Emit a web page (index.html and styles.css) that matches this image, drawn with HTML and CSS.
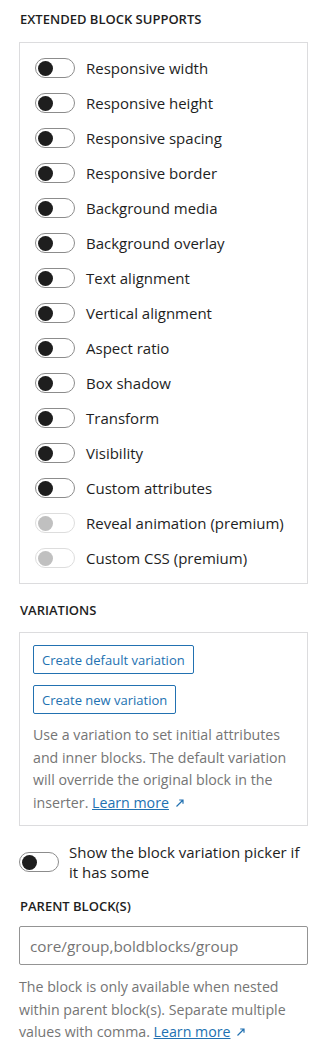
FILE: index.html
```html
<!DOCTYPE html>
<html lang="en">
<head>
<meta charset="utf-8">
<title>Block settings</title>
<link rel="stylesheet" href="styles.css">
</head>
<body>
<div class="panel">
  <h2 class="section-title">EXTENDED BLOCK SUPPORTS</h2>
  <div class="box toggle-list">
    <div class="toggle-row"><span class="toggle"><span class="thumb"></span></span><span class="label">Responsive width</span></div>
    <div class="toggle-row"><span class="toggle"><span class="thumb"></span></span><span class="label">Responsive height</span></div>
    <div class="toggle-row"><span class="toggle"><span class="thumb"></span></span><span class="label">Responsive spacing</span></div>
    <div class="toggle-row"><span class="toggle"><span class="thumb"></span></span><span class="label">Responsive border</span></div>
    <div class="toggle-row"><span class="toggle"><span class="thumb"></span></span><span class="label">Background media</span></div>
    <div class="toggle-row"><span class="toggle"><span class="thumb"></span></span><span class="label">Background overlay</span></div>
    <div class="toggle-row"><span class="toggle"><span class="thumb"></span></span><span class="label">Text alignment</span></div>
    <div class="toggle-row"><span class="toggle"><span class="thumb"></span></span><span class="label">Vertical alignment</span></div>
    <div class="toggle-row"><span class="toggle"><span class="thumb"></span></span><span class="label">Aspect ratio</span></div>
    <div class="toggle-row"><span class="toggle"><span class="thumb"></span></span><span class="label">Box shadow</span></div>
    <div class="toggle-row"><span class="toggle"><span class="thumb"></span></span><span class="label">Transform</span></div>
    <div class="toggle-row"><span class="toggle"><span class="thumb"></span></span><span class="label">Visibility</span></div>
    <div class="toggle-row"><span class="toggle"><span class="thumb"></span></span><span class="label">Custom attributes</span></div>
    <div class="toggle-row"><span class="toggle is-disabled"><span class="thumb"></span></span><span class="label">Reveal animation (premium)</span></div>
    <div class="toggle-row"><span class="toggle is-disabled"><span class="thumb"></span></span><span class="label">Custom CSS (premium)</span></div>
  </div>

  <h2 class="section-title gap-top">VARIATIONS</h2>
  <div class="box variations">
    <button class="btn" type="button">Create default variation</button>
    <button class="btn" type="button">Create new variation</button>
    <p class="help">Use a variation to set initial attributes and inner blocks. The default variation will override the original block in the inserter. <a href="#" class="link">Learn more</a><svg class="ext-icon" width="10" height="10" viewBox="0 0 10 10" aria-hidden="true"><path d="M1.5 8.5 L8 2 M4.2 2 H8 V5.8" fill="none" stroke="#2271b1" stroke-width="1.2"/></svg></p>
  </div>

  <div class="toggle-row picker"><span class="toggle"><span class="thumb"></span></span><span class="label">Show the block variation picker if it has some</span></div>

  <h2 class="section-title parent-title">PARENT BLOCK(S)</h2>
  <input class="text-input" type="text" placeholder="core/group,boldblocks/group">
  <p class="help outside">The block is only available when nested within parent block(s). Separate multiple values with comma. <a href="#" class="link">Learn more</a><svg class="ext-icon" width="10" height="10" viewBox="0 0 10 10" aria-hidden="true"><path d="M1.5 8.5 L8 2 M4.2 2 H8 V5.8" fill="none" stroke="#2271b1" stroke-width="1.2"/></svg></p>
</div>
</body>
</html>
```

FILE: styles.css
```css
html, body {
  margin: 0;
  padding: 0;
  background: #ffffff;
}

body {
  font-family: "Open Sans", "Noto Sans", sans-serif;
  font-size: 15px;
  line-height: 20px;
  color: #1e1e1e;
}

.panel {
  padding: 9px 20px 0 19px;
}

.section-title {
  margin: 0 0 13px 0;
  font-size: 13px;
  line-height: 20px;
  font-weight: 600;
  color: #1e1e1e;
  padding-left: 1px;
}

.section-title.gap-top {
  margin-top: 16px;
  margin-bottom: 12px;
}

.box {
  border: 1px solid #dcdcde;
}

.toggle-list {
  display: flex;
  flex-direction: column;
  gap: 15px;
  padding: 15px;
}

.toggle-row {
  display: flex;
  align-items: center;
  gap: 11px;
}

.label {
  font-size: 15px;
  line-height: 20px;
}

.toggle {
  flex: none;
  box-sizing: border-box;
  width: 40px;
  height: 20px;
  border: 1px solid #8c8c8c;
  border-radius: 10px;
  background: #fff;
  display: flex;
  align-items: center;
  padding-left: 1.5px;
}

.thumb {
  width: 15px;
  height: 15px;
  border-radius: 50%;
  background: #1e1e1e;
}

.toggle.is-disabled {
  border-color: #dddddd;
}

.toggle.is-disabled .thumb {
  background: #c0c0c0;
}

.variations {
  padding: 12px 13px 11px 13px;
  display: flex;
  flex-direction: column;
  align-items: flex-start;
  gap: 11px;
}

.btn {
  box-sizing: border-box;
  height: 29px;
  padding: 0 8px;
  border: 1px solid #2271b1;
  border-radius: 2px;
  background: #fff;
  color: #2271b1;
  font-family: inherit;
  font-size: 13px;
  line-height: 20px;
}

.help {
  margin: 0;
  color: #757575;
  font-size: 14.2px;
  line-height: 22.5px;
}

.variations .help {
  margin-top: -1px;
}

.link {
  color: #2271b1;
  text-decoration: underline;
}

.ext-icon {
  display: inline-block;
  margin-left: 6px;
  vertical-align: 0;
}

.picker {
  margin-top: 16px;
  gap: 10px;
}

.parent-title {
  margin-top: 14px;
  margin-bottom: 10px;
}

.text-input {
  display: block;
  box-sizing: border-box;
  width: 100%;
  height: 39px;
  margin: 0;
  padding: 0 10px;
  border: 1px solid #949494;
  border-radius: 2px;
  font-family: inherit;
  font-size: 15.3px;
  color: #1e1e1e;
}

.text-input::placeholder {
  color: #757575;
}

.help.outside {
  margin-top: 11px;
}
```
